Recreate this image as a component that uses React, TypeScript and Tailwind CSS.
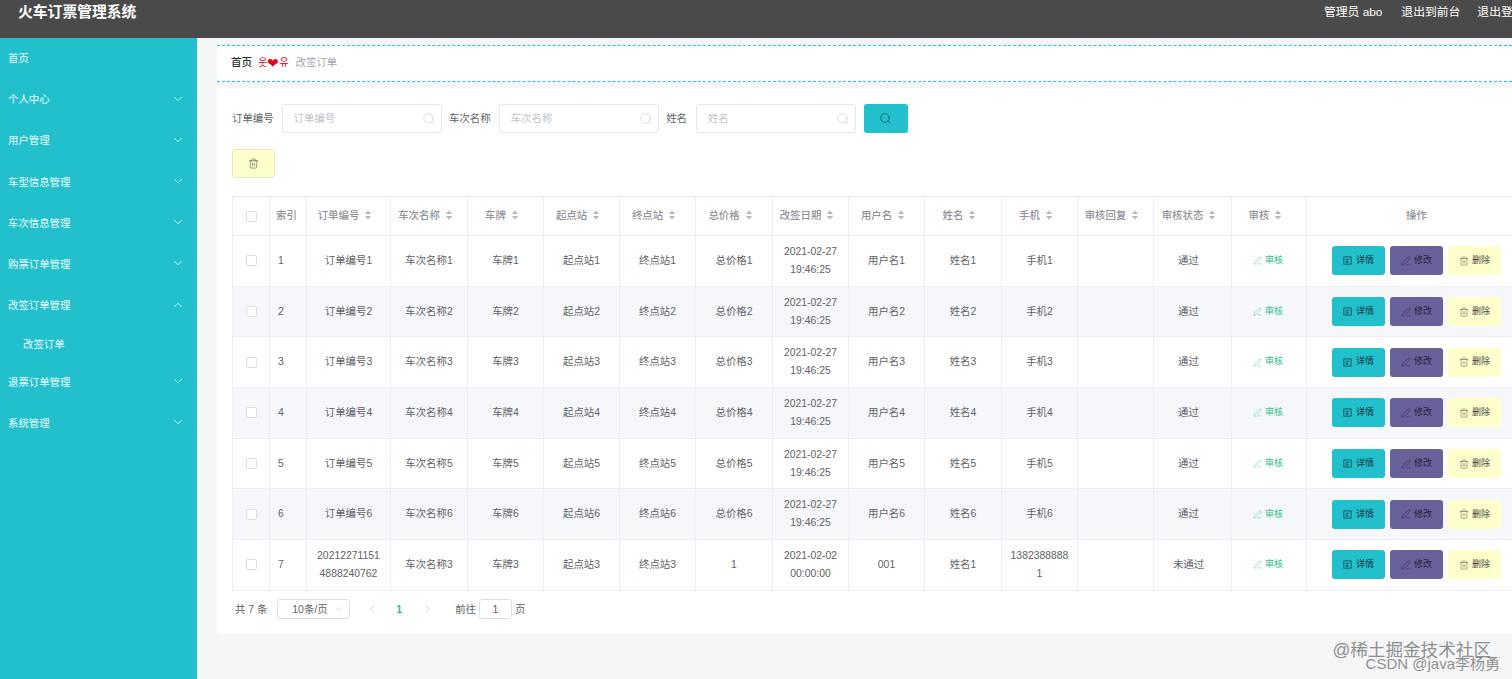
import { ChevronDown, ChevronLeft, ChevronRight, ChevronUp, PenLine, Search, Trash2 } from "lucide-react";

const menu = [
  { name: "个人中心" },
  { name: "用户管理" },
  { name: "车型信息管理" },
  { name: "车次信息管理" },
  { name: "购票订单管理" },
  { name: "改签订单管理", open: true, sub: "改签订单" },
  { name: "退票订单管理" },
  { name: "系统管理" },
];

const filters = [
  { label: "订单编号", gap: "ml-0", labelGap: "mr-2" },
  { label: "车次名称", gap: "ml-[7.5px]", labelGap: "mr-2" },
  { label: "姓名", gap: "ml-[7.5px]", labelGap: "mr-[9px]" },
];

const columns = [
  { title: "", width: "w-[37px]" },
  { title: "索引", width: "w-[37px]" },
  { title: "订单编号", width: "w-[84px]", sort: true },
  { title: "车次名称", width: "w-[77px]", sort: true },
  { title: "车牌", width: "w-[76px]", sort: true },
  { title: "起点站", width: "w-[76px]", sort: true },
  { title: "终点站", width: "w-[76px]", sort: true },
  { title: "总价格", width: "w-[77px]", sort: true },
  { title: "改签日期", width: "w-[76px]", sort: true },
  { title: "用户名", width: "w-[76px]", sort: true },
  { title: "姓名", width: "w-[77px]", sort: true },
  { title: "手机", width: "w-[76px]", sort: true },
  { title: "审核回复", width: "w-[76px]", sort: true },
  { title: "审核状态", width: "w-[78px]", sort: true },
  { title: "审核", width: "w-[75px]", sort: true },
  { title: "操作", width: "w-[220px]" },
];

const rows = [1, 2, 3, 4, 5, 6].map((n) => [
  `订单编号${n}`,
  `车次名称${n}`,
  `车牌${n}`,
  `起点站${n}`,
  `终点站${n}`,
  `总价格${n}`,
  "2021-02-27 19:46:25",
  `用户名${n}`,
  `姓名${n}`,
  `手机${n}`,
  "",
  "通过",
]);

rows.push([
  "202122711514888240762",
  "车次名称3",
  "车牌3",
  "起点站3",
  "终点站3",
  "1",
  "2021-02-02 00:00:00",
  "001",
  "姓名1",
  "13823888881",
  "",
  "未通过",
]);

function SortCaret() {
  return (
    <svg viewBox="0 0 8 11" className="ml-[5px] mr-[7px] inline-block h-[10px] w-[8px] align-[-1px] text-[#b4b7bd]" fill="currentColor">
      <path d="M4 0.5 7.5 4.5H0.5Z" />
      <path d="M4 10.5 0.5 6.5H7.5Z" />
    </svg>
  );
}

function TicketIcon() {
  return (
    <svg viewBox="0 0 10 10" className="h-[9px] w-[9px]" fill="none" stroke="currentColor" strokeWidth="0.8">
      <rect x="1" y="1" width="8" height="8" />
      <path d="M3 3.5h4M3 5.5h2.5M5.5 5.5v1.5H3" />
    </svg>
  );
}

function Checkbox() {
  return <span className="ml-[13px] block h-[11px] w-[11px] rounded-[2px] border border-[#dcdfe6] bg-white" />;
}

export default function App() {
  return (
    <div
      className="flex h-screen w-screen flex-col overflow-hidden bg-[#f5f6f8] text-[10.4px] text-[#606266]"
      style={{ fontFamily: '"Liberation Sans", "Noto Sans CJK SC", "Noto Sans CJK KR", sans-serif' }}
    >
      <header className="flex h-[38px] shrink-0 items-start justify-between bg-[#4a4a4a] text-white">
        <h1 className="pl-[18px] pt-[2px] text-[14.8px] font-bold leading-5">火车订票管理系统</h1>
        <div className="flex w-[188px] shrink-0 gap-[17px] whitespace-nowrap pt-[3px] text-[11.8px] leading-[18px]">
          <span>管理员 abo</span>
          <span className="ml-[2px]">退出到前台</span>
          <span>退出登录</span>
        </div>
      </header>

      <div className="flex min-h-0 flex-1">
        <aside className="w-[197px] shrink-0 bg-[#22c0cc] text-[#eefcfd]">
          <div className="flex h-[41.5px] items-center pl-2">首页</div>
          {menu.map((item) => (
            <div key={item.name}>
              <div className="flex h-[41.2px] items-center justify-between pl-2 pr-[12px]">
                <span>{item.name}</span>
                {item.open ? (
                  <ChevronUp size={14} strokeWidth={1.4} className="-mt-[3px]" />
                ) : (
                  <ChevronDown size={14} strokeWidth={1.4} className="-mt-[3px]" />
                )}
              </div>
              {item.sub && <div className="flex h-[35.5px] items-center pl-[23px]">{item.sub}</div>}
            </div>
          ))}
        </aside>

        <main className="min-w-0 flex-1 pl-5 pt-[7px]">
          <nav className="flex h-[36.5px] items-center border-y border-dashed border-[#22c8d8] bg-white pl-[14px]">
            <span className="text-[10.6px] font-medium text-[#303133]">首页</span>
            <span className="ml-[6px] flex items-center text-[10px] leading-none text-[#e60012]">
              <span>웃</span>
              <span className="text-[14px]">❤</span>
              <span>유</span>
            </span>
            <span className="ml-[7px] text-[#a3a6ad]">改签订单</span>
          </nav>

          <section className="mt-[6.5px] h-[546px] bg-white pl-[15px] pt-4">
            <div className="flex h-[29px] items-center">
              {filters.map((f) => (
                <div key={f.label} className={`flex items-center ${f.gap}`}>
                  <span className={`text-[#606266] ${f.labelGap}`}>{f.label}</span>
                  <div className="flex h-[29px] w-[160px] items-center justify-between rounded-[3px] border border-[#e4e7ed] pl-[11px] pr-[5px] text-[#c0c4cc]">
                    <span>{f.label}</span>
                    <Search size={14} strokeWidth={1} />
                  </div>
                </div>
              ))}
              <button className="ml-2 flex h-[29px] w-[44px] items-center justify-center rounded-[3px] bg-[#22c0cc] text-[#1f3f4a]">
                <Search size={13} strokeWidth={1.2} />
              </button>
            </div>

            <button className="mt-4 flex h-[29px] w-[43px] items-center justify-center rounded-[3px] border border-[#e8e8c0] bg-[#ffffcc] text-[#444]">
              <Trash2 size={11} strokeWidth={1.2} />
            </button>

            <div className="mt-[18px] overflow-hidden">
              <table className="w-[1294px] table-fixed border border-[#ebeef5]">
                <colgroup>
                  {columns.map((c, i) => (
                    <col key={i} className={c.width} />
                  ))}
                </colgroup>
                <thead>
                  <tr className="h-[39px] text-[#909399]">
                    {columns.map((c, i) => (
                      <th
                        key={i}
                        className={`whitespace-nowrap border border-[#ebeef5] font-medium ${i === 1 ? "pl-[6px] text-left" : "text-center"}`}
                      >
                        {i === 0 ? <Checkbox /> : c.title}
                        {c.sort && <SortCaret />}
                      </th>
                    ))}
                  </tr>
                </thead>
                <tbody>
                  {rows.map((row, r) => (
                    <tr key={r} className={`h-[50.7px] ${r % 2 === 1 ? "bg-[#f5f7fa]" : "bg-white"}`}>
                      <td className="border border-[#ebeef5]">
                        <Checkbox />
                      </td>
                      <td className="border border-[#ebeef5] pl-2">{r + 1}</td>
                      {row.map((cell, i) => (
                        <td
                          key={i}
                          className={`break-all border border-[#ebeef5] pl-[8px] text-center leading-[18px] ${i === 11 ? "pr-4" : "pr-[8px]"}`}
                        >
                          {i === 6 ? <span className="break-normal">{cell}</span> : cell}
                        </td>
                      ))}
                      <td className="border border-[#ebeef5] text-center align-middle text-[9px] text-[#2fc08f]">
                        <span className="mx-auto flex w-fit -translate-x-[1px] items-center gap-[3px]">
                          <PenLine size={9} strokeWidth={1.1} />
                          审核
                        </span>
                      </td>
                      <td className="border border-[#ebeef5] text-[9px]">
                        <div className="flex justify-center gap-[5px]">
                          <button className="flex h-[29px] w-[53px] items-center justify-center gap-[4px] rounded-[3px] bg-[#22c0cc] text-[#12343c]">
                            <TicketIcon />
                            详情
                          </button>
                          <button className="flex h-[29px] w-[53px] items-center justify-center gap-[3px] rounded-[3px] bg-[#68619a] text-[#25233d]">
                            <PenLine size={10} strokeWidth={1.1} />
                            修改
                          </button>
                          <button className="flex h-[29px] w-[53px] items-center justify-center gap-[3px] rounded-[3px] bg-[#ffffcc] text-[#444]">
                            <Trash2 size={10} strokeWidth={1.1} />
                            删除
                          </button>
                        </div>
                      </td>
                    </tr>
                  ))}
                </tbody>
              </table>
            </div>

            <div className="mt-2 flex h-[21px] items-center pl-[3px] text-[#606266]">
              <span>共 7 条</span>
              <div className="ml-[10px] flex h-[20px] w-[73px] items-center justify-between rounded-[3px] border border-[#dcdfe6] pl-[14px] pr-[4px]">
                <span>10条/页</span>
                <ChevronDown size={12} strokeWidth={1} className="text-[#c0c4cc]" />
              </div>
              <ChevronLeft size={12} strokeWidth={1.2} className="ml-4 text-[#b4b7bd]" />
              <span className="ml-[18px] font-bold text-[#22c0a8]">1</span>
              <ChevronRight size={12} strokeWidth={1.2} className="ml-[20px] text-[#b4b7bd]" />
              <span className="ml-[21px]">前往</span>
              <span className="ml-[3px] flex h-[20px] w-[33px] items-center justify-center rounded-[3px] border border-[#dcdfe6]">1</span>
              <span className="ml-[3px]">页</span>
            </div>
          </section>
        </main>
      </div>

      <div className="absolute right-[21px] top-[640px] whitespace-nowrap text-[17.6px] leading-[20px] text-[#8f8f8f]">@稀土掘金技术社区</div>
      <div className="absolute right-[12px] top-[655px] whitespace-nowrap text-[15px] leading-[18px] text-[#8f8f8f]">CSDN @java李杨勇</div>
    </div>
  );
}
